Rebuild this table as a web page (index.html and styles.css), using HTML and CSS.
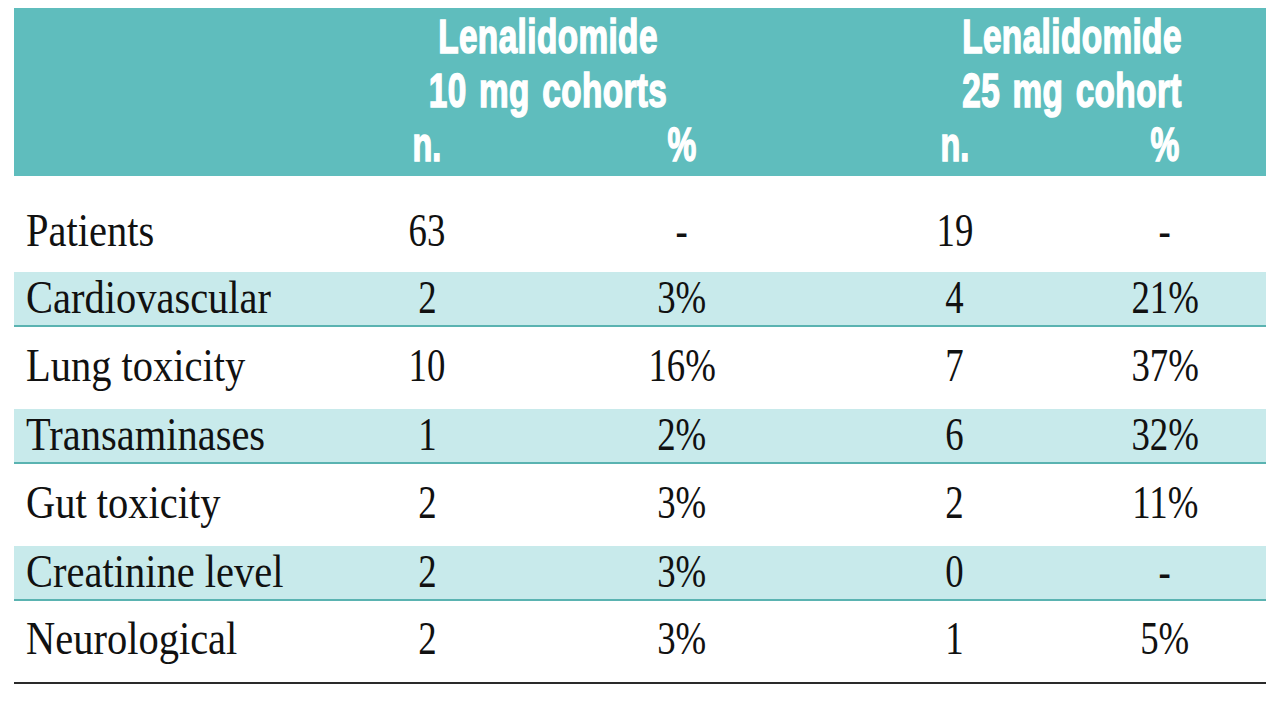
FILE: index.html
```html
<!DOCTYPE html>
<html lang="en">
<head>
<meta charset="utf-8">
<title>Lenalidomide toxicity</title>
<link rel="stylesheet" href="styles.css">
</head>
<body>
<div class="table">
  <div class="head">
    <div class="blank"></div>
    <div class="group g1"><div class="gt">Lenalidomide<br>10 mg cohorts</div></div>
    <div class="group g2"><div class="gt">Lenalidomide<br>25 mg cohort</div></div>
    <div class="blank"></div>
    <div class="sub"><span class="hs">n.</span></div>
    <div class="sub"><span class="hs">%</span></div>
    <div class="sub"><span class="hs">n.</span></div>
    <div class="sub"><span class="hs">%</span></div>
  </div>

  <div class="row first">
    <div class="label"><span class="lt">Patients</span></div>
    <div class="num"><span class="nt">63</span></div>
    <div class="num"><span class="nt">-</span></div>
    <div class="num"><span class="nt">19</span></div>
    <div class="num"><span class="nt">-</span></div>
  </div>
  <div class="row shade">
    <div class="label"><span class="lt">Cardiovascular</span></div>
    <div class="num"><span class="nt">2</span></div>
    <div class="num"><span class="nt">3%</span></div>
    <div class="num"><span class="nt">4</span></div>
    <div class="num"><span class="nt">21%</span></div>
  </div>
  <div class="row plain">
    <div class="label"><span class="lt">Lung toxicity</span></div>
    <div class="num"><span class="nt">10</span></div>
    <div class="num"><span class="nt">16%</span></div>
    <div class="num"><span class="nt">7</span></div>
    <div class="num"><span class="nt">37%</span></div>
  </div>
  <div class="row shade">
    <div class="label"><span class="lt">Transaminases</span></div>
    <div class="num"><span class="nt">1</span></div>
    <div class="num"><span class="nt">2%</span></div>
    <div class="num"><span class="nt">6</span></div>
    <div class="num"><span class="nt">32%</span></div>
  </div>
  <div class="row plain">
    <div class="label"><span class="lt">Gut toxicity</span></div>
    <div class="num"><span class="nt">2</span></div>
    <div class="num"><span class="nt">3%</span></div>
    <div class="num"><span class="nt">2</span></div>
    <div class="num"><span class="nt">11%</span></div>
  </div>
  <div class="row shade">
    <div class="label"><span class="lt">Creatinine level</span></div>
    <div class="num"><span class="nt">2</span></div>
    <div class="num"><span class="nt">3%</span></div>
    <div class="num"><span class="nt">0</span></div>
    <div class="num"><span class="nt">-</span></div>
  </div>
  <div class="row last">
    <div class="label"><span class="lt">Neurological</span></div>
    <div class="num"><span class="nt">2</span></div>
    <div class="num"><span class="nt">3%</span></div>
    <div class="num"><span class="nt">1</span></div>
    <div class="num"><span class="nt">5%</span></div>
  </div>
</div>
</body>
</html>
```

FILE: styles.css
```css
html, body {
  margin: 0;
  padding: 0;
  background: #ffffff;
}

.table {
  margin: 8px 0 0 14px;
  width: 1252px;
}

.head,
.row {
  display: grid;
  grid-template-columns: 321px 184px 326px 219px 202px;
}

.head {
  background: #5fbdbd;
  color: #ffffff;
  font-family: "Liberation Sans", Arial, sans-serif;
  font-weight: bold;
  font-size: 49px;
  line-height: 54px;
  padding: 1px 0 5px 0;
  -webkit-text-stroke: 1.6px #ffffff;
}

.group {
  grid-column: span 2;
}

.g1 {
  padding-right: 84px;
}

.g2 {
  padding-left: 33px;
}

.gt {
  text-align: center;
  transform: scaleX(0.68);
  transform-origin: center;
  white-space: nowrap;
  letter-spacing: 0.6px;
  word-spacing: 4px;
}

.sub {
  text-align: center;
}

.hs {
  display: inline-block;
  transform: scaleX(0.66);
  transform-origin: center;
}

.row {
  font-family: "Liberation Serif", "Times New Roman", serif;
  font-size: 46px;
  line-height: 50px;
  color: #111111;
}

.row.first {
  padding: 30px 0 16px 0;
}

.row.shade {
  background: #c8eaeb;
  padding: 1px 0 2px 0;
  border-bottom: 2px solid #5ab3b1;
}

.row.plain {
  padding: 14px 0 18px 0;
}

.row.last {
  padding: 13px 0 18px 0;
  border-bottom: 2px solid #2a2a2a;
}

.label {
  padding-left: 12px;
  white-space: nowrap;
}

.lt {
  display: inline-block;
  transform: scaleX(0.88);
  transform-origin: left center;
}

.num {
  text-align: center;
}

.nt {
  display: inline-block;
  transform: scaleX(0.8);
  transform-origin: center;
}
```
